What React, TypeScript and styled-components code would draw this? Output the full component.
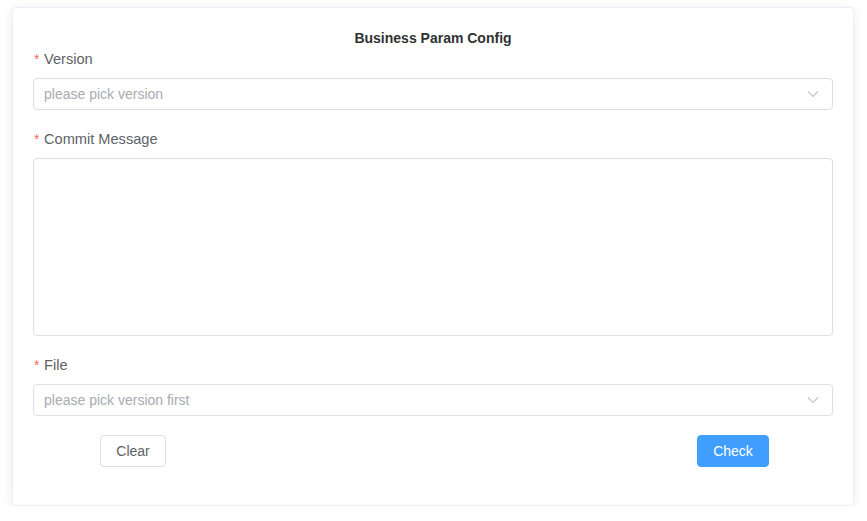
import React from "react";
import styled, { createGlobalStyle } from "styled-components";

const Global = createGlobalStyle`
  html, body { margin: 0; padding: 0; background: #ffffff; }
  body { font-family: "Liberation Sans", Arial, Helvetica, sans-serif; }
  * { box-sizing: border-box; }
`;

const Page = styled.div`
  padding: 7px 13px 0 12px;
`;

const Card = styled.div`
  border: 1px solid #ebeef5;
  border-radius: 4px;
  background: #fff;
  box-shadow: 0 2px 12px 0 rgba(0, 0, 0, 0.08);
  padding: 20px;
`;

const Title = styled.div`
  text-align: center;
  font-size: 14px;
  line-height: 20px;
  font-weight: bold;
  color: #303133;
`;

const Item = styled.div`
  margin-bottom: 18px;
`;

const Label = styled.div`
  font-size: 14.6px;
  line-height: 20px;
  height: 20px;
  padding-top: 1px;
  color: #606266;
  margin-bottom: 10px;
  display: flex;
  align-items: center;
`;

const Star = styled.span`
  color: #f56c6c;
  width: 11px;
  padding-left: 1px;
  font-size: 14px;
`;

const SelectBox = styled.div`
  height: 32px;
  border: 1px solid #dcdfe6;
  border-radius: 4px;
  display: flex;
  align-items: center;
  justify-content: space-between;
  padding: 0 13px 0 10px;
  font-size: 14px;
  color: #a8abb2;
`;

const TextArea = styled.div`
  height: 178px;
  border: 1px solid #dcdfe6;
  border-radius: 4px;
`;

const ButtonRow = styled.div`
  display: grid;
  grid-template-columns: repeat(4, 1fr);
  margin-bottom: 18px;
  padding-top: 1px;
`;

const Cell = styled.div<{ $col: number }>`
  grid-column: ${(p) => p.$col};
  display: flex;
  justify-content: center;
`;

const Button = styled.button<{ $primary?: boolean }>`
  height: 32px;
  padding: 0 15px;
  border-radius: 4px;
  font-family: "Liberation Sans", Arial, Helvetica, sans-serif;
  font-size: 14px;
  border: 1px solid ${(p) => (p.$primary ? "#409eff" : "#dcdfe6")};
  background: ${(p) => (p.$primary ? "#409eff" : "#fff")};
  color: ${(p) => (p.$primary ? "#fff" : "#606266")};
  cursor: pointer;
`;

const Chevron = () => (
  <svg width="12" height="8" viewBox="0 0 12 8" fill="none">
    <path d="M1 1.5 L6 6.5 L11 1.5" stroke="#c0c4cc" strokeWidth="1.1" />
  </svg>
);

export default function App() {
  return (
    <>
      <Global />
      <Page>
        <Card>
          <Title>Business Param Config</Title>
          <Item>
            <Label>
              <Star>*</Star>Version
            </Label>
            <SelectBox>
              <span>please pick version</span>
              <Chevron />
            </SelectBox>
          </Item>
          <Item>
            <Label>
              <Star>*</Star>Commit Message
            </Label>
            <TextArea />
          </Item>
          <Item>
            <Label>
              <Star>*</Star>File
            </Label>
            <SelectBox>
              <span>please pick version first</span>
              <Chevron />
            </SelectBox>
          </Item>
          <ButtonRow>
            <Cell $col={1}>
              <Button>Clear</Button>
            </Cell>
            <Cell $col={4}>
              <Button $primary>Check</Button>
            </Cell>
          </ButtonRow>
        </Card>
      </Page>
    </>
  );
}
